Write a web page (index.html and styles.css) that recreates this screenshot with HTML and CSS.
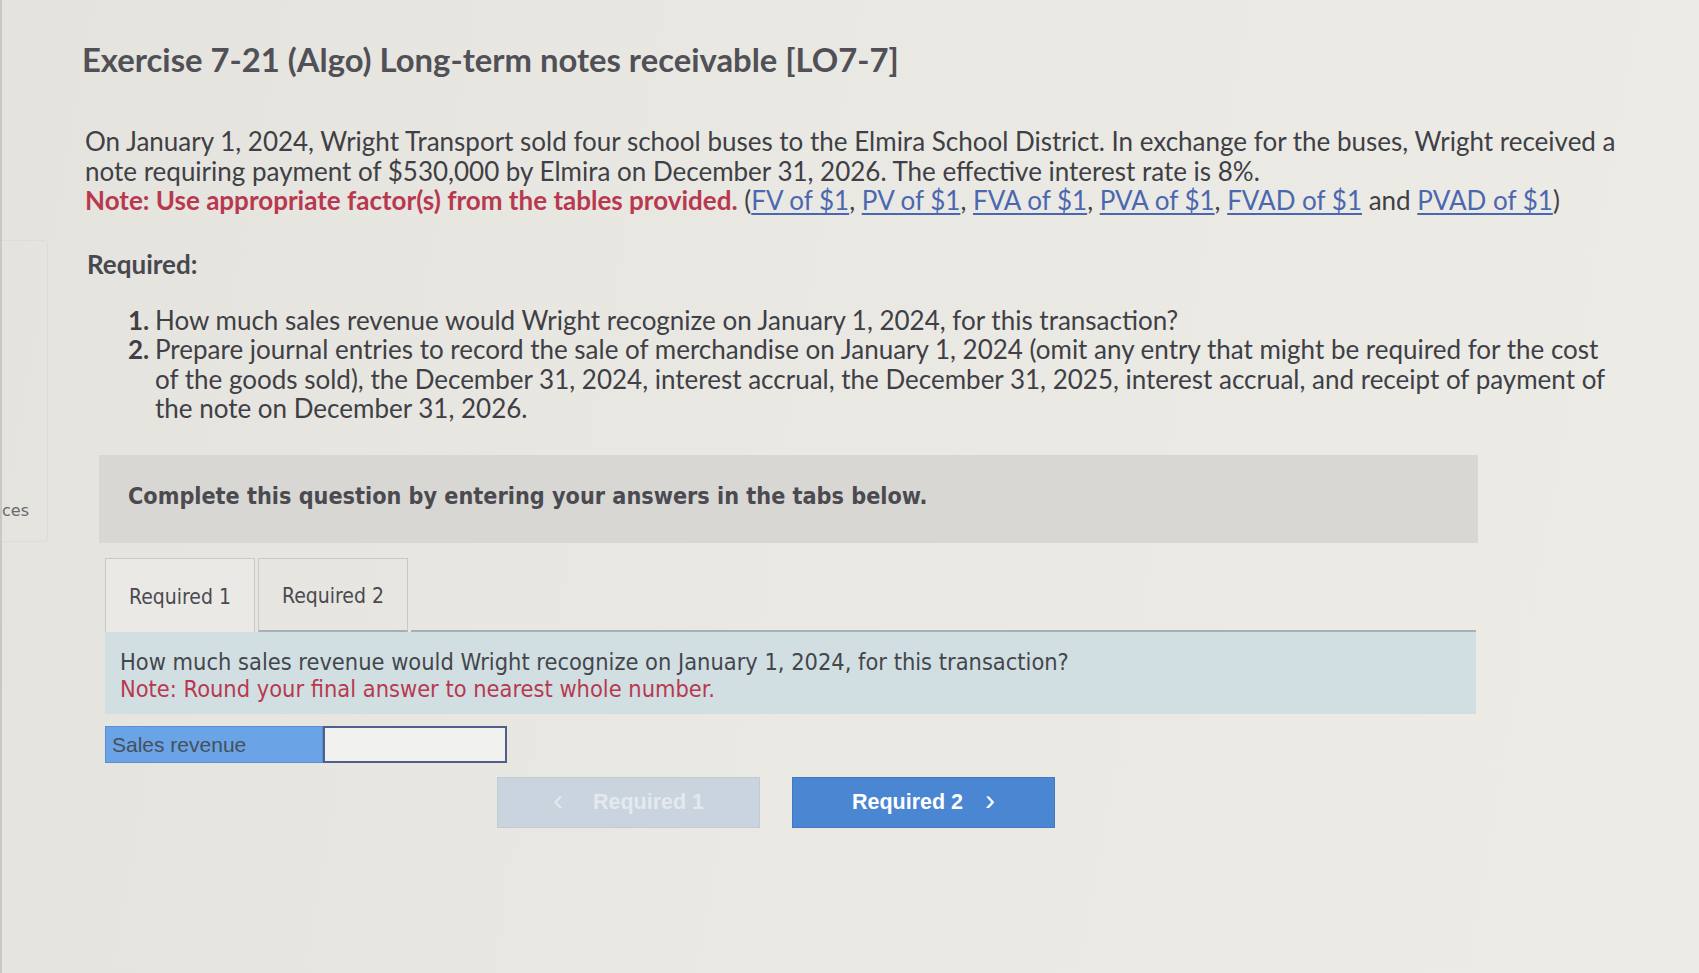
FILE: index.html
```html
<!DOCTYPE html>
<html>
<head>
<meta charset="utf-8">
<link rel="stylesheet" href="styles.css">
</head>
<body>
<div class="page">
  <aside class="side">
    <div class="side-box"><span class="side-text">ces</span></div>
  </aside>
  <main class="main">
    <h1 class="title">Exercise 7-21 (Algo) Long-term notes receivable [LO7-7]</h1>
    <p class="intro">On January 1, 2024, Wright Transport sold four school buses to the Elmira School District. In exchange for the buses, Wright received a<br>note requiring payment of $530,000 by Elmira on December 31, 2026. The effective interest rate is 8%.<br><span class="note">Note: Use appropriate factor(s) from the tables provided.</span> (<a class="lnk">FV of $1</a>, <a class="lnk">PV of $1</a>, <a class="lnk">FVA of $1</a>, <a class="lnk">PVA of $1</a>, <a class="lnk">FVAD of $1</a> and <a class="lnk">PVAD of $1</a>)</p>
    <h2 class="req">Required:</h2>
    <ol class="list">
      <li><span class="num">1.</span><span>How much sales revenue would Wright recognize on January 1, 2024, for this transaction?</span></li>
      <li><span class="num">2.</span><span>Prepare journal entries to record the sale of merchandise on January 1, 2024 (omit any entry that might be required for the cost<br>of the goods sold), the December 31, 2024, interest accrual, the December 31, 2025, interest accrual, and receipt of payment of<br>the note on December 31, 2026.</span></li>
    </ol>
    <div class="instr">Complete this question by entering your answers in the tabs below.</div>
    <div class="work">
      <div class="tabs">
        <div class="tab active">Required 1</div>
        <div class="tab">Required 2</div>
        <div class="tab-rest"></div>
      </div>
      <div class="qbox">
        <div class="q">How much sales revenue would Wright recognize on January 1, 2024, for this transaction?</div>
        <div class="qnote">Note: Round your final answer to nearest whole number.</div>
      </div>
      <div class="row">
        <div class="label">Sales revenue</div>
        <div class="input"></div>
      </div>
      <div class="nav">
        <div class="btn prev"><span class="chev">&lsaquo;</span>Required 1</div>
        <div class="btn next">Required 2<span class="chev r">&rsaquo;</span></div>
      </div>
    </div>
  </main>
</div>
</body>
</html>
```
FILE: styles.css
```css
html, body {
  margin: 0;
  padding: 0;
}
body {
  width: 1699px;
  height: 973px;
  overflow: hidden;
  background: linear-gradient(100deg, #e4e3de 0%, #e9e8e3 45%, #ecebe6 100%);
  font-family: "Lato", "Liberation Sans", sans-serif;
  color: #3f3f45;
}
.page {
  display: flex;
  height: 100%;
  border-left: 2px solid #c9c8c3;
}
.side {
  width: 46px;
  flex: none;
  padding-top: 240px;
}
.side-box {
  height: 302px;
  box-sizing: border-box;
  border-right: 1px solid #dddcd7;
  border-top: 1px solid #dddcd7;
  border-bottom: 1px solid #dddcd7;
  border-radius: 0 4px 4px 0;
  display: flex;
  align-items: flex-end;
  padding-bottom: 21px;
}
.side-text {
  font-family: "DejaVu Sans", sans-serif;
  font-size: 16px;
  color: #6a6a6e;
}
.main {
  padding-left: 34px;
  flex: 1;
}
.title {
  margin: 40px 0 0 0;
  font-size: 32.8px;
  line-height: 40px;
  font-weight: 700;
  color: #505056;
}
.intro {
  margin: 47px 0 0 3px;
  font-size: 26px;
  line-height: 29.5px;
  white-space: nowrap;
}
.note {
  color: #b8394f;
  font-weight: 700;
}
.lnk {
  color: #4b67b0;
  text-decoration: underline;
  text-underline-offset: 3px;
}
.req {
  margin: 33px 0 0 5px;
  font-size: 26px;
  line-height: 30px;
  font-weight: 700;
  color: #48484e;
}
.list {
  list-style: none;
  margin: 27px 0 0 0;
  padding: 0 0 0 46px;
  font-size: 26px;
  line-height: 29.5px;
  white-space: nowrap;
}
.list li {
  display: flex;
}
.num {
  width: 27px;
  flex: none;
  font-weight: 700;
}
.instr {
  margin: 31px 0 0 17px;
  width: 1379px;
  height: 88px;
  box-sizing: border-box;
  padding: 27px 0 0 29px;
  background: #d8d7d3;
  font-family: "DejaVu Sans Condensed", "DejaVu Sans", sans-serif;
  font-stretch: condensed;
  font-weight: 700;
  font-size: 23.2px;
  color: #4a4a50;
}
.work {
  margin: 15px 0 0 23px;
  width: 1371px;
}
.tabs {
  display: flex;
  height: 74px;
}
.tab {
  width: 150px;
  box-sizing: border-box;
  border: 1px solid #c9c8c4;
  display: flex;
  align-items: center;
  justify-content: center;
  padding-top: 4px;
  font-family: "DejaVu Sans Condensed", "DejaVu Sans", sans-serif;
  font-stretch: condensed;
  font-size: 21px;
  color: #4a4a50;
  margin-right: 3px;
  border-bottom: 2px solid #a9b0b4;
}
.tab.active {
  border-bottom: none;
  background: #eae9e5;
}
.tab-rest {
  flex: 1;
  border-bottom: 2px solid #a9b0b4;
}
.qbox {
  height: 82px;
  box-sizing: border-box;
  padding: 17px 15px 0 15px;
  background: #d1dfe2;
  font-family: "DejaVu Sans Condensed", "DejaVu Sans", sans-serif;
  font-stretch: condensed;
  font-size: 23.4px;
  line-height: 27px;
  color: #44464c;
}
.qnote {
  color: #b8394f;
}
.row {
  display: flex;
  margin-top: 12px;
  height: 37px;
}
.label {
  width: 218px;
  box-sizing: border-box;
  background: #6aa4e6;
  border: 1px solid #5a8fd0;
  font-family: "Liberation Sans", sans-serif;
  font-size: 21px;
  color: #44505e;
  padding: 6px 0 0 6px;
}
.input {
  width: 184px;
  box-sizing: border-box;
  background: #f0f0ee;
  border: 2px solid #4f5f8a;
}
.nav {
  display: flex;
  gap: 32px;
  margin: 14px 0 0 392px;
}
.btn {
  width: 263px;
  height: 51px;
  box-sizing: border-box;
  display: flex;
  align-items: center;
  justify-content: center;
  font-family: "Liberation Sans", sans-serif;
  font-weight: 700;
  font-size: 21.5px;
}
.prev {
  background: #c9d4de;
  color: #e4e9ef;
  border: 1px solid #c0cbd6;
}
.next {
  background: #4b86d2;
  color: #ffffff;
  border: 1px solid #4279c4;
}
.chev {
  font-size: 30px;
  font-weight: 400;
  line-height: 1;
  margin: -4px 30px 0 0;
}
.chev.r {
  margin: -4px 0 0 22px;
}
```
